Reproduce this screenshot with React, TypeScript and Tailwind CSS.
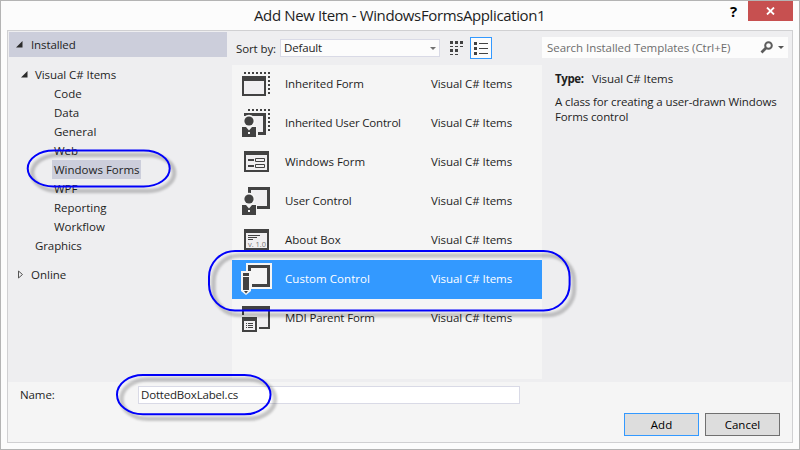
import React from "react";

const INK = "#424242";
const PAPER = "#f5f5f5";

const dots = (y: number, x0: number, rows: number) => (
  <g fill={INK}>
    {Array.from({ length: (28 - x0) / 4 + 1 }, (_, i) => (
      <rect key={"h" + i} x={x0 + i * 4} y={y} width="2" height="2" />
    ))}
    {Array.from({ length: rows }, (_, i) => (
      <rect key={"v" + i} x="28" y={y + 4 + i * 4} width="2" height="2" />
    ))}
  </g>
);

const Person = () => (
  <g>
    <circle cx="9" cy="17" r="6.3" fill={PAPER} />
    <path d="M1 22H17V34H1Z" fill={PAPER} />
    <circle cx="9" cy="17" r="4.6" fill={INK} />
    <path d="M2 23H6L9 26.5L12 23H16V33H2Z" fill={INK} />
    <rect x="8" y="28" width="2" height="2" fill={PAPER} />
  </g>
);

const icons: Record<string, React.ReactNode> = {
  inheritedForm: (
    <>
      {dots(7, 4, 5)}
      <path d="M2 11H26V31H2Z" fill={INK} />
      <path d="M4 16H24V29H4Z" fill="#f0eff1" />
    </>
  ),
  inheritedUser: (
    <>
      {dots(5, 8, 5)}
      <path d="M4 9H26V31H4Z" fill={INK} />
      <path d="M7 12H23V28H7Z" fill="#f0eff1" />
      <path d="M3 12H8V34H3Z" fill={PAPER} />
      <path d="M8 28H18V32H8Z" fill={PAPER} />
      <Person />
    </>
  ),
  form: (
    <>
      <path d="M4 8H29V29H4Z" fill={INK} />
      <path d="M6 12H27V27H6Z" fill="#f0eff1" />
      <path d="M8 16H14V18H8ZM8 22H14V24H8Z" fill={INK} />
      <path d="M15.5 15.5H24.5V18.5H15.5ZM15.5 21.5H24.5V24.5H15.5Z" fill="none" stroke={INK} />
    </>
  ),
  user: (
    <>
      <path d="M8 5H30V27H8Z" fill={INK} />
      <path d="M11 8H27V24H11Z" fill="#f0eff1" />
      <path d="M7 11H11V27H7ZM8 24H17V28H8Z" fill={PAPER} />
      <Person />
    </>
  ),
  about: (
    <>
      <path d="M4 8H29V29H4Z" fill={INK} />
      <path d="M6 12H27V27H6Z" fill="#f0eff1" />
      <path d="M8 14H20V15H8ZM8 16H17V17H8ZM8 18H13V19H8Z" fill={INK} />
      <text x="8" y="26" fontSize="7.5" fill="#777" textLength="18" fontFamily="Open Sans, sans-serif">v. 1.0</text>
    </>
  ),
  custom: (
    <>
      <path d="M6 3H32V29H11V31L6 35L1 31V11H6Z" fill={PAPER} />
      <path d="M8 5H30V27H12V24H27V8H11V11H8Z" fill={INK} />
      <path d="M3 13H9V16H3ZM3 17H9V30H3ZM4 31H8L6 33.5Z" fill={INK} />
    </>
  ),
  mdi: (
    <>
      <path d="M4 11H28V28H4Z" fill="#f0eff1" />
      <path d="M2 7H30V30H19V28H28V11H4V16H2Z" fill={INK} />
      <path d="M1 16H18V34H1Z" fill={PAPER} />
      <path d="M2 18H17V33H2Z" fill={INK} />
      <path d="M4 22H15V31H4Z" fill="#f0eff1" />
      <path d="M6 24H7V25H6ZM8 24H13V25H8ZM6 26H7V27H6ZM8 26H13V27H8ZM6 28H7V29H6ZM8 28H13V29H8Z" fill={INK} />
    </>
  ),
};

const items = [
  { name: "Inherited Form", icon: "inheritedForm", tracking: "tracking-[-0.1px]" },
  { name: "Inherited User Control", icon: "inheritedUser", tracking: "tracking-[-0.18px]" },
  { name: "Windows Form", icon: "form", tracking: "tracking-normal" },
  { name: "User Control", icon: "user", tracking: "tracking-[-0.1px]" },
  { name: "About Box", icon: "about", tracking: "tracking-normal" },
  { name: "Custom Control", icon: "custom", tracking: "tracking-[0.05px]" },
  { name: "MDI Parent Form", icon: "mdi", tracking: "tracking-[-0.12px]" },
];

const categories = ["Code", "Data", "General", "Web", "Windows Forms", "WPF", "Reporting", "Workflow"];

const Expanded = () => (
  <svg width="7" height="7" viewBox="0 0 7 7" className="shrink-0">
    <path d="M6.5 0V6.5H0Z" fill="#2b2b2b" />
  </svg>
);

const callouts = [
  { x: 27.7, y: 150.5, width: 142, height: 36, rx: 26, ry: 18 },
  { x: 209, y: 251, width: 360.6, height: 59.5, rx: 26, ry: 26 },
  { x: 117, y: 375, width: 153.5, height: 39.3, rx: 26, ry: 19.6 },
];

export default function App() {
  return (
    <div className="relative flex h-[450px] w-[800px] flex-col overflow-hidden border border-[#b4b4b4] bg-[#fcfcfc] px-[6px] pb-[6px] font-['Open_Sans','Noto_Sans',sans-serif] text-[11.5px] leading-[19px] text-[#1e1e1e]">
      <header className="flex h-[29px] shrink-0 items-start">
        <h1 className="w-[715px] pl-[247px] pt-[3px] text-[15px] leading-[22px] tracking-[-0.38px] whitespace-nowrap">Add New Item - WindowsFormsApplication1</h1>
        <div className="w-[26px] pl-[8px] text-[15px] font-bold leading-[20px] text-black">?</div>
        <button className="flex h-5 w-[45px] items-center justify-center bg-[#c75050]">
          <svg width="9" height="8" viewBox="0 0 9 8"><path d="M1 .5L8 7.5M8 .5L1 7.5" stroke="#fff" strokeWidth="1.8" /></svg>
        </button>
      </header>

      <div className="flex h-[413px] w-[786px] shrink-0 flex-col border border-[#d0d0d2] bg-[#f5f5f5]">
        <div className="flex h-[351px] shrink-0 bg-[#eeeef0]">
          <nav className="w-[224px] shrink-0 pl-px pt-px">
            <div className="flex h-[25px] w-[218px] items-center bg-[#cccedb] pl-[7px]">
              <Expanded />
              <span className="pl-[8px] tracking-[-0.1px]">Installed</span>
            </div>
            <div className="mt-2 flex h-[19px] items-center pl-[12px]">
              <Expanded />
              <span className="pl-[7px] tracking-[-0.07px]">Visual C# Items</span>
            </div>
            <ul className="pl-[43px]">
              {categories.map((c) => (
                <li key={c} className="h-[19px]">
                  <span className={"block h-[19px] w-[89px] pl-[2px] whitespace-nowrap " + (c === "Windows Forms" ? "bg-[#cccedb]" : "")}>{c}</span>
                </li>
              ))}
            </ul>
            <div className="pl-[26px] tracking-[-0.1px]">Graphics</div>
            <div className="mt-[10px] flex items-center pl-[9px]">
              <svg width="6" height="9" viewBox="0 0 6 9"><path d="M.5 1V8L4.5 4.5Z" fill="none" stroke="#555" /></svg>
              <span className="pl-[7px]">Online</span>
            </div>
          </nav>

          <main className="w-[310px] shrink-0">
            <div className="flex h-[34px] items-start pl-[4px]">
              <span className="w-[44px] pt-[8px] tracking-[-0.1px]">Sort by:</span>
              <div className="mt-2 flex h-[18px] w-[160px] items-center justify-between border border-[#d9dae6] bg-[#fcfcfc] pl-[3px] pr-[3px]">
                <span className="relative -top-px tracking-[-0.15px]">Default</span>
                <svg width="6" height="3"><path d="M0 0H6L3 3Z" fill="#717171" /></svg>
              </div>
              <svg className="ml-[10px] mt-[10px]" width="14" height="14" shapeRendering="crispEdges" fill={INK}>
                <path d="M0 0H3V3H0ZM5 0H8V3H5ZM10 0H13V3H10ZM0 5H3V6H0ZM5 5H8V6H5ZM10 5H13V6H10ZM0 8H3V11H0ZM5 8H8V11H5ZM0 13H3V14H0ZM5 13H8V14H5Z" />
              </svg>
              <div className="ml-[6px] mt-[6px] flex h-[22px] w-[22px] items-center justify-center border border-[#3399ff] bg-[#fcfcfc]">
                <svg width="14" height="13" shapeRendering="crispEdges" fill={INK}>
                  <path d="M0 0H3V3H0ZM0 5H3V8H0ZM0 10H3V13H0ZM5 1H14V2H5ZM5 6H14V7H5ZM5 11H14V12H5Z" />
                </svg>
              </div>
            </div>
            <ul className="h-[314px] bg-[#f5f5f5]">
              {items.map(({ name, icon, tracking }) => (
                <li key={name} className={"flex h-[39px] items-center pl-[8px] " + (icon === "custom" ? "bg-[#3399ff] text-white" : "")}>
                  <svg width="34" height="39" className="shrink-0">{icons[icon]}</svg>
                  <span className={"w-[146px] shrink-0 pb-[2px] pl-[11px] whitespace-nowrap " + tracking}>{name}</span>
                  <span className="pb-[2px] pl-[11px] tracking-[-0.07px] whitespace-nowrap">Visual C# Items</span>
                </li>
              ))}
            </ul>
          </main>

          <aside className="w-[250px] pt-[6px]">
            <div className="flex h-[21px] w-[246px] items-center bg-[#fcfcfc] pl-[5px] text-[#6d6d6d]">
              <span className="w-[213px] tracking-[-0.06px] whitespace-nowrap">Search Installed Templates (Ctrl+E)</span>
              <svg width="14" height="13" viewBox="0 0 14 13" fill="none" stroke="#5c5c5c"><circle cx="8.5" cy="4.5" r="3.3" strokeWidth="2" /><path d="M6 7L1.5 11.5" strokeWidth="2.7" /></svg>
              <svg className="ml-[4px]" width="6" height="3"><path d="M0 0H6L3 3Z" fill="#555" /></svg>
            </div>
            <div className="pl-[13px] pt-[11px]">
              <span className="inline-block w-[37px] font-bold tracking-[-0.4px]">Type:</span>
              <span className="tracking-[-0.07px]">Visual C# Items</span>
            </div>
            <p className="w-[232px] pl-[13px] pt-[6px] leading-[15px] tracking-[-0.12px] whitespace-nowrap">A class for creating a user-drawn Windows<br />Forms control</p>
          </aside>
        </div>

        <div className="flex pt-[4px]">
          <label className="w-[130px] pl-[12px] leading-[17px] tracking-[-0.1px]">Name:</label>
          <div className="h-[18px] w-[382px] border border-[#d9dae6] bg-white pl-[2px] leading-[15px] tracking-[-0.18px]">DottedBoxLabel.cs</div>
        </div>
        <div className="flex justify-end gap-[6px] pr-[12px] pt-[9px]">
          <button className="h-[23px] w-[75px] border border-[#3399ff] bg-[#dddddd] leading-[21px] text-black">Add</button>
          <button className="h-[23px] w-[75px] border border-[#707070] bg-[#dddddd] leading-[21px] text-black">Cancel</button>
        </div>
      </div>

      <svg className="pointer-events-none absolute -left-px -top-px" width="800" height="450" fill="none">
        <defs>
          <filter id="soft" x="-10%" y="-30%" width="120%" height="160%"><feGaussianBlur stdDeviation="1.3" /></filter>
        </defs>
        {callouts.map((c) => (
          <g key={c.x}>
            <rect {...c} transform="translate(4.5 4.5)" stroke="#000" strokeOpacity="0.2" strokeWidth="4.5" filter="url(#soft)" />
            <rect {...c} stroke="#0000fa" strokeWidth="2" />
          </g>
        ))}
      </svg>
    </div>
  );
}
